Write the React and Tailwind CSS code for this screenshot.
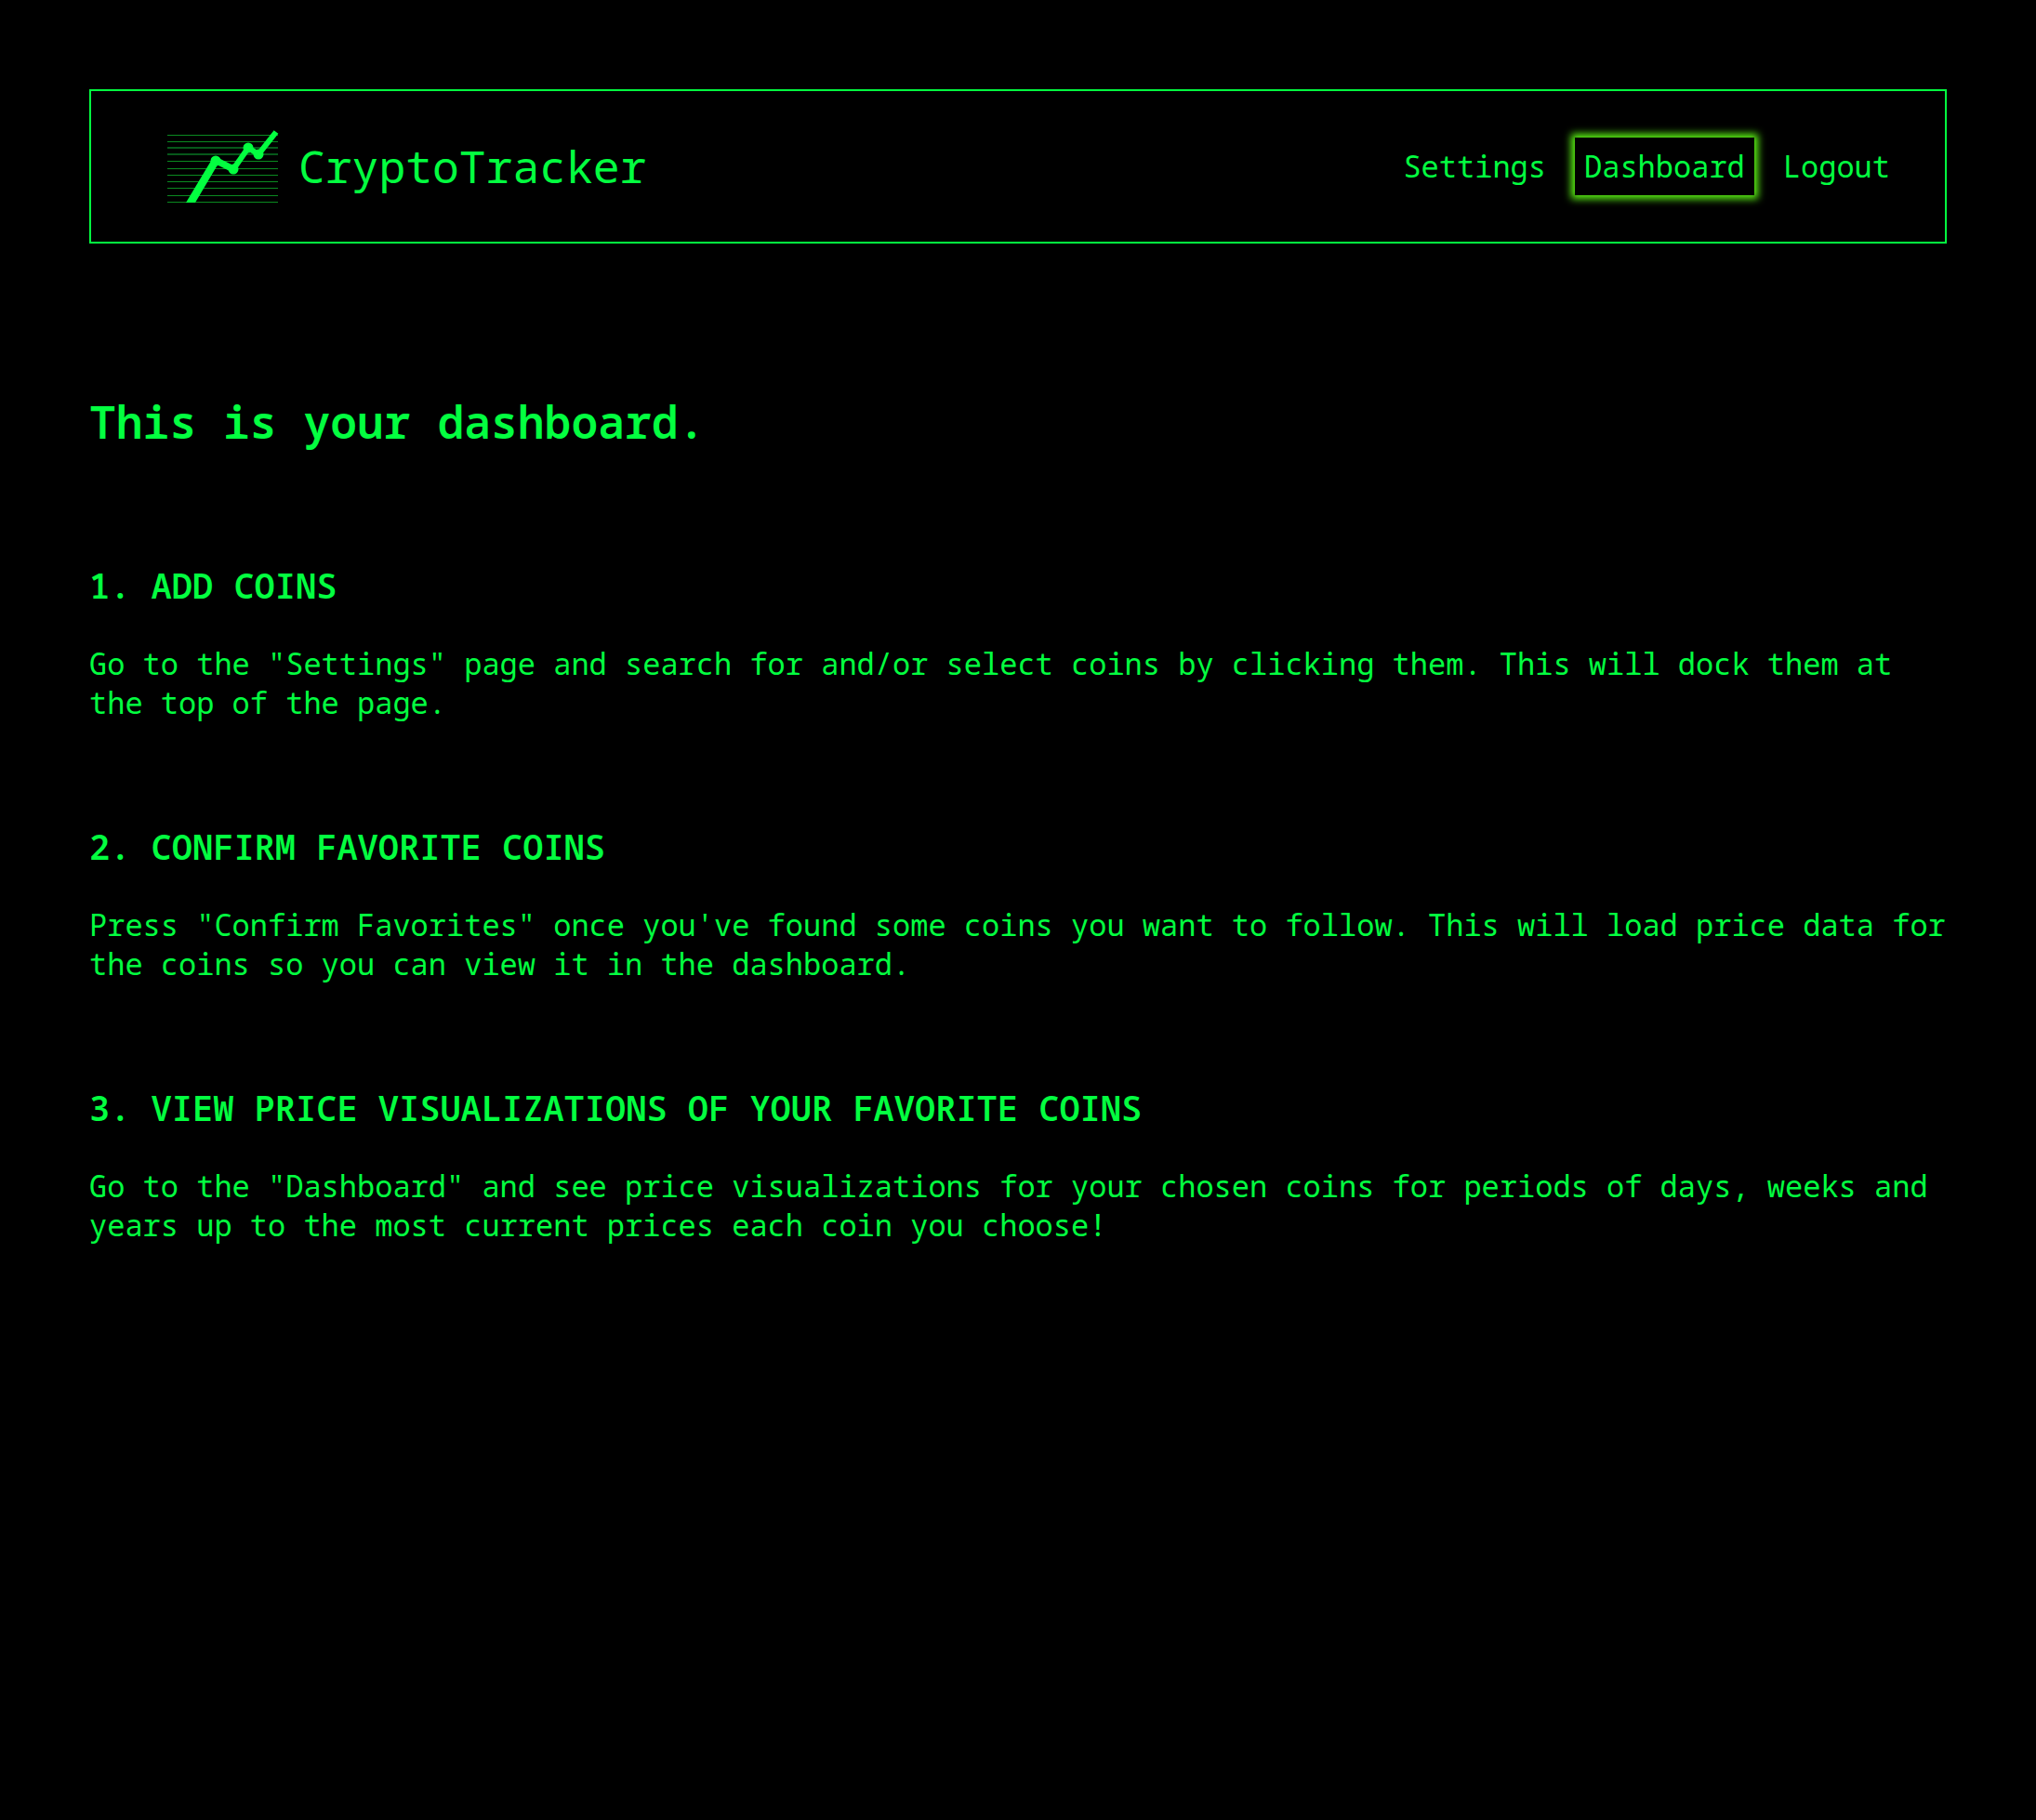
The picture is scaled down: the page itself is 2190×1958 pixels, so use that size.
const steps = [
  {
    title: '1. ADD COINS',
    text: 'Go to the "Settings" page and search for and/or select coins by clicking them. This will dock them at the top of the page.',
  },
  {
    title: '2. CONFIRM FAVORITE COINS',
    text: 'Press "Confirm Favorites" once you\'ve found some coins you want to follow. This will load price data for the coins so you can view it in the dashboard.',
  },
  {
    title: '3. VIEW PRICE VISUALIZATIONS OF YOUR FAVORITE COINS',
    text: 'Go to the "Dashboard" and see price visualizations for your chosen coins for periods of days, weeks and years up to the most current prices each coin you choose!',
  },
];

const gridLines = [
  { y: 5, soft: false },
  { y: 12, soft: false },
  { y: 18, soft: true },
  { y: 25, soft: true },
  { y: 33, soft: false },
  { y: 41, soft: false },
  { y: 48, soft: false },
  { y: 55, soft: false },
  { y: 62, soft: false },
  { y: 70, soft: false },
  { y: 77, soft: false },
];

function Logo() {
  return (
    <svg width="120" height="78" viewBox="0 0 120 78" aria-hidden="true">
      {gridLines.map(({ y, soft }) => (
        <rect key={y} x="0" y={y} width="119" height={soft ? 2 : 1} fill={soft ? '#06581a' : '#0a8a20'} />
      ))}
      <path d="M20 78L47 33L56 34L30 78Z" fill="#03ff40" />
      <path d="M51 32L71 42" stroke="#03ff40" strokeWidth="7" />
      <path d="M71 42L87 19M87 19L98 26L117 2" fill="none" stroke="#03ff40" strokeWidth="6" />
      <circle cx="52" cy="33" r="5.5" fill="#03ff40" />
      <circle cx="71" cy="42" r="5.5" fill="#03ff40" />
      <circle cx="87" cy="19" r="5.5" fill="#03ff40" />
      <circle cx="98" cy="26" r="5.5" fill="#03ff40" />
    </svg>
  );
}

export default function App() {
  return (
    <div className="min-h-screen bg-black p-24 font-['Noto_Sans_Mono','DejaVu_Sans_Mono',monospace] text-[32px] leading-[42px] text-[#03ff40]">
      <header className="flex items-center justify-between border-2 border-[#03ff40] py-[42px] pr-[49px] pl-[82px]">
        <a href="#home" className="flex items-center gap-[21px]">
          <Logo />
          <span className="text-[48px] leading-[62px]">CryptoTracker</span>
        </a>
        <nav className="flex items-center gap-[21px]">
          <a href="#settings" className="p-[10px]">Settings</a>
          <a
            href="#dashboard"
            aria-current="page"
            className="p-[10px] shadow-[0_0_8px_4px_#5cf615]"
          >
            Dashboard
          </a>
          <a href="#logout" className="p-[10px]">Logout</a>
        </nav>
      </header>
      <main className="pt-40">
        <h1 className="mb-[10px] text-[48px] leading-[64px] font-semibold">This is your dashboard.</h1>
        {steps.map((step) => (
          <section key={step.title} className="pt-[109px]">
            <h2 className="text-[37px] leading-[50px] font-semibold">{step.title}</h2>
            <p className="mt-[38px]">{step.text}</p>
          </section>
        ))}
      </main>
    </div>
  );
}
